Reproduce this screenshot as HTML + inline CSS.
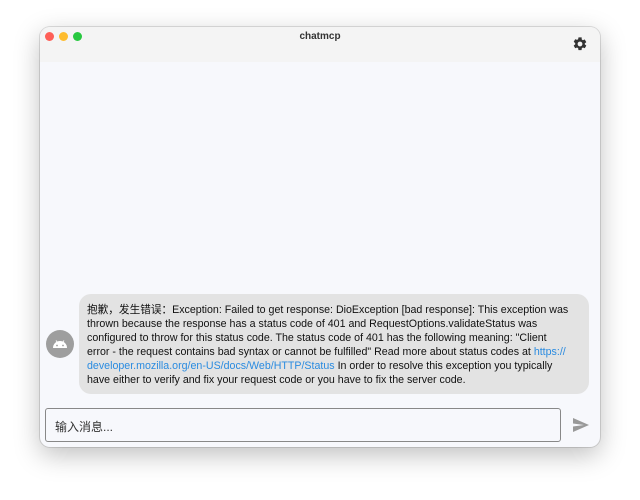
<!DOCTYPE html>
<html><head><meta charset="utf-8"><style>
*{margin:0;padding:0;box-sizing:border-box}
body{width:640px;height:500px;background:#fff;position:relative;overflow:hidden;font-family:"Liberation Sans","Noto Sans CJK SC",sans-serif}
.win{position:absolute;left:40px;top:27px;width:560px;height:420px;background:#f7f8fc;border-radius:10px;box-shadow:0 8px 26px rgba(0,0,0,.25),0 0 0 1px rgba(0,0,0,.12);overflow:hidden}
.tb{position:absolute;left:0;top:0;width:100%;height:35px;background:#f4f4f4}
.dot{position:absolute;top:5px;width:9px;height:9px;border-radius:50%}
.title{position:absolute;top:4px;width:100%;text-align:center;font-size:10px;font-weight:bold;color:#333}
.bubble{position:absolute;left:39px;top:267px;width:510px;height:100px;background:#e3e3e3;border-radius:12px;padding:9px 8px;font-size:10.65px;line-height:14px;color:#111;white-space:nowrap}
.a{color:#2a8be0}
.av{position:absolute;left:6px;top:303px;width:28px;height:28px;border-radius:50%;background:#9e9e9e}
.inp{position:absolute;left:5px;top:381px;width:516px;height:34px;border:1px solid #888;border-radius:3px;background:#f7f8fc;font-size:12px;color:#333;padding:9px 9px}
</style></head><body>
<div class="win">
<div class="tb">
<div class="dot" style="left:5px;background:#fe5f57"></div>
<div class="dot" style="left:19px;background:#febc2e"></div>
<div class="dot" style="left:33px;background:#28c840"></div>
<div class="title">chatmcp</div>
<svg style="position:absolute;left:532px;top:9px" width="16" height="16" viewBox="0 0 24 24"><path fill="#333" d="M19.14 12.94c.04-.3.06-.61.06-.94s-.02-.64-.07-.94l2.03-1.58a.49.49 0 0 0 .12-.61l-1.920-3.32a.49.49 0 0 0-.59-.22l-2.39.96a7 7 0 0 0-1.62-.94l-.36-2.54A.48.48 0 0 0 13.92 2h-3.840a.48.48 0 0 0-.48.41l-.36 2.54c-.59.24-1.13.57-1.62.94l-2.39-.96a.48.48 0 0 0-.59.22L2.72 8.470a.47.47 0 0 0 .12.61l2.03 1.58c-.05.3-.07.63-.07.94s.02.64.07.94l-2.03 1.58a.49.49 0 0 0-.12.61l1.92 3.32c.12.22.37.29.59.22l2.39-.96c.5.38 1.03.7 1.62.94l.36 2.54c.05.24.24.41.48.41h3.84c.24 0 .44-.17.47-.41l.36-2.54c.59-.24 1.130-.56 1.62-.94l2.39.96c.22.08.47 0 .59-.22l1.92-3.32a.47.47 0 0 0-.12-.61l-2.01-1.58zM12 15.6A3.6 3.6 0 1 1 12 8.4a3.6 3.6 0 0 1 0 7.2z"/></svg>
</div>
<div class="av"><svg style="position:absolute;left:6px;top:7px" width="16" height="14" viewBox="0 0 16 14"><path fill="#fff" d="M1 11a7 7 0 0 1 14 0z"/><circle cx="5" cy="8.5" r="0.9" fill="#9e9e9e"/><circle cx="11" cy="8.5" r="0.9" fill="#9e9e9e"/><path stroke="#fff" stroke-width="1" d="M4 3.5l1.5 2M12 3.5l-1.5 2"/></svg></div>
<div class="bubble">抱歉，发生错误：Exception: Failed to get response: DioException [bad response]: This exception was<br>thrown because the response has a status code of 401 and RequestOptions.validateStatus was<br>configured to throw for this status code. The status code of 401 has the following meaning: "Client<br>error - the request contains bad syntax or cannot be fulfilled" Read more about status codes at <span class="a">https://</span><br><span class="a">developer.mozilla.org/en-US/docs/Web/HTTP/Status</span> In order to resolve this exception you typically<br>have either to verify and fix your request code or you have to fix the server code.</div>
<div class="inp">输入消息...</div>
<svg style="position:absolute;left:533px;top:391px" width="16" height="14" viewBox="0 0 16 14"><path fill="#999" d="M0 0l16 7-16 7 0-5.5 11-1.5-11-1.5z"/></svg>
</div>
</body></html>
